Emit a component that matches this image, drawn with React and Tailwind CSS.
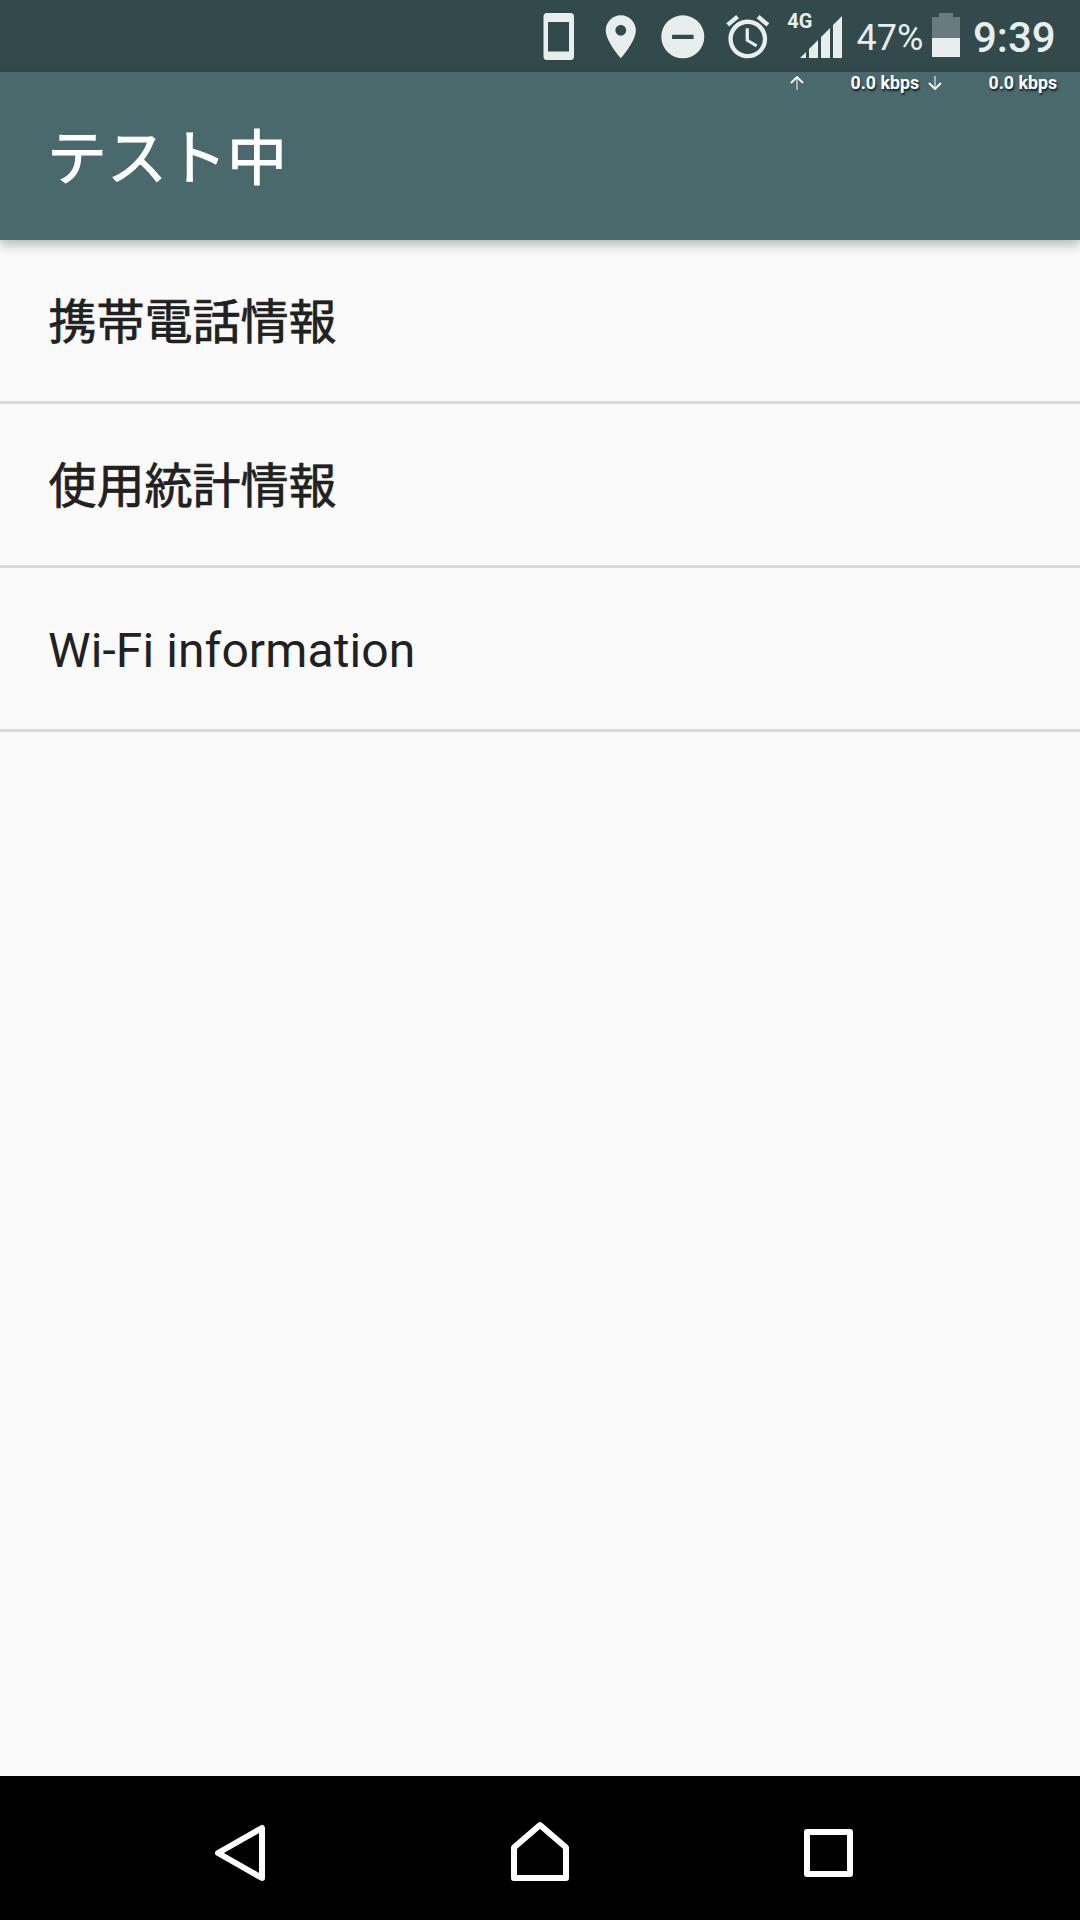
import React from "react";

const rows = [
  { label: "携帯電話情報", style: "pl-[48.500px] [-webkit-text-stroke:0.700px_#212121]" },
  { label: "使用統計情報", style: "pl-[48.500px] [-webkit-text-stroke:0.700px_#212121]" },
  { label: "Wi-Fi information", style: "pl-[48px] tracking-[0.100px]" },
];

const StatusBar = () => (
  <div className="flex h-[72px] items-start bg-[#334a4c] pl-[543px] text-[#e8eded]">
    <svg className="mt-[13px] h-[47px] w-[31px] shrink-0" viewBox="0 0 31 47" fill="currentColor">
      <path fillRule="evenodd" d="M4 0h23.500a3.500 3.500 0 0 1 3.500 3.500v40a3.500 3.500 0 0 1-3.500 3.500H4a3.500 3.500 0 0 1-3.500-3.500v-40A3.500 3.500 0 0 1 4 0zM5 9v29.500h21V9z" />
    </svg>
    <svg className="mt-[10.700px] ml-[20.700px] h-[51.600px] w-[51.600px] shrink-0" viewBox="0 0 24 24" fill="currentColor">
      <path d="M12 2C8.130 2 5 5.130 5 9c0 5.250 7 13 7 13s7-7.750 7-13c0-3.870-3.130-7-7-7zm0 9.500c-1.380 0-2.500-1.120-2.500-2.500s1.120-2.500 2.500-2.500 2.500 1.120 2.500 2.500-1.120 2.500-2.500 2.500z" />
    </svg>
    <svg className="mt-[10.700px] ml-[10.400px] h-[51.600px] w-[51.600px] shrink-0" viewBox="0 0 24 24" fill="currentColor">
      <path fillRule="evenodd" d="M12 2a10 10 0 1 0 0 20 10 10 0 0 0 0-20zm5 11H7v-2h10z" />
    </svg>
    <svg className="mt-[10.700px] ml-[13.500px] h-[51.600px] w-[51.600px] shrink-0" viewBox="0 0 24 24" fill="currentColor">
      <path d="M22 5.720l-4.600-3.860-1.290 1.530 4.600 3.860L22 5.720zM7.880 3.390L6.600 1.860 2 5.710l1.290 1.530 4.590-3.850zM12.500 8H11v6l4.750 2.850.75-1.230-4-2.370V8zM12 4c-4.970 0-9 4.030-9 9s4.020 9 9 9c4.970 0 9-4.030 9-9s-4.030-9-9-9zm0 16c-3.870 0-7-3.130-7-7s3.130-7 7-7 7 3.130 7 7-3.130 7-7 7z" />
    </svg>
    <span className="mt-[11px] ml-[14px] w-[24px] shrink-0 text-[20px] leading-[20px] font-bold">4G</span>
    <svg className="mt-4 ml-[-11.400px] h-[42px] w-[42px] shrink-0" viewBox="0 0 42 42" fill="currentColor">
      <path d="M0 42l6-6v6zM9 42v-9l9-9v18zM21 42V21l9-9v30zM33 42V9l9-9v42z" />
    </svg>
    <span className="mt-[17px] ml-[14.500px] w-[68px] shrink-0 text-[36px] leading-[42px]">47%</span>
    <svg className="mt-[13px] ml-[7.500px] h-[44px] w-[28px] shrink-0" viewBox="0 0 28 44" fill="currentColor">
      <path opacity=".3" d="M7 0h14v4h7v21H0V4h7z" />
      <path d="M0 25h28v19H0z" />
    </svg>
    <span className="mt-[14px] ml-[13px] shrink-0 text-[42px] leading-[48px] font-medium">9:39</span>
  </div>
);

const Arrow = ({ down }) => (
  <svg className={`h-[14px] w-[14px] shrink-0 ${down ? "rotate-180" : ""}`} viewBox="0 0 14 14" fill="none" stroke="#fff">
    <path d="M7 2v12" strokeWidth="2" opacity=".5" />
    <path d="M1 7l6-6 6 6" strokeWidth="1.800" />
  </svg>
);

// network speed overlay under the status bar
const Speed = () => (
  <div className="flex h-6 items-start pt-[2px] pl-[790px] text-[17.800px] leading-[18px] font-bold text-white [text-shadow:1px_2px_2px_rgba(0,0,0,0.7)]">
    <span className="flex pt-[2px]">
      <Arrow />
    </span>
    <span className="ml-[46.500px] w-[68px] shrink-0 whitespace-nowrap">0.0 kbps</span>
    <span className="ml-[9.500px] flex pt-[2px]">
      <Arrow down />
    </span>
    <span className="ml-[46.500px] shrink-0 whitespace-nowrap">0.0 kbps</span>
  </div>
);

const NavBar = () => (
  <div className="flex h-36 items-center justify-between bg-black px-[204px] pt-2 text-white">
    <svg className="h-[72px] w-[72px]" viewBox="0 0 72 72" fill="none" stroke="currentColor" strokeWidth="6" strokeLinejoin="round">
      <path d="M14 37L58 12v50z" />
    </svg>
    <svg className="h-[72px] w-[72px]" viewBox="0 0 72 72" fill="none" stroke="currentColor" strokeWidth="6" strokeLinejoin="round">
      <path d="M10 62V31.500L36 9l26 22.500V62z" />
    </svg>
    <svg className="h-[72px] w-[72px]" viewBox="0 0 72 72" fill="none" stroke="currentColor" strokeWidth="6" strokeLinejoin="round">
      <path d="M3 16h43v42H3z" />
    </svg>
  </div>
);

const App = () => {
  return (
    <div className="flex h-[1920px] w-[1080px] flex-col overflow-hidden bg-[#fafafa] font-['Roboto','Noto_Sans_CJK_JP',sans-serif]">
      <StatusBar />
      <header className="h-[168px] bg-[#49696d] shadow-[0_4px_12px_rgba(0,0,0,0.3)]">
        <Speed />
        <h1 className="mt-[20px] pl-[47px] text-[60px] leading-[88px] text-white [-webkit-text-stroke:0.900px_#fff]">テスト中</h1>
      </header>
      <ul className="flex-1 text-[48px] text-[#212121]">
        {rows.map((row) => (
          <li key={row.label} className={`flex h-[164px] items-center border-b-[3px] border-[#dbdbdb] pt-1 ${row.style}`}>
            {row.label}
          </li>
        ))}
      </ul>
      <NavBar />
    </div>
  );
};

export default App;
